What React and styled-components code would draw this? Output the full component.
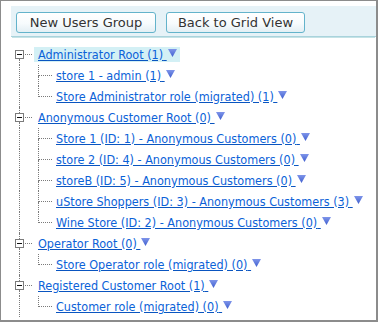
import React from "react";
import styled, { createGlobalStyle } from "styled-components";

const GlobalStyle = createGlobalStyle`
  html, body {
    margin: 0;
    padding: 0;
    background: #ffffff;
  }
  body {
    font-family: "DejaVu Sans", Verdana, sans-serif;
  }
`;

const Frame = styled.div`
  width: 378px;
  height: 322px;
  box-sizing: border-box;
  border-left: 1px solid #8c8c8c;
  border-top: 1px solid #8c8c8c;
  border-right: 2px solid #8c8c8c;
  border-bottom: 2px solid #8c8c8c;
  padding: 5px 0 0 10px;
  overflow: hidden;
  background: #fff;
`;

const Toolbar = styled.div`
  height: 31px;
  box-sizing: border-box;
  background: #e6f2f7;
  display: flex;
  align-items: flex-start;
  gap: 10px;
  padding: 6px 0 0 5px;
  border-bottom: 1px solid #a9d3dc;
  box-shadow: 0 2px 0 -1px #c5e3e6, 0 1px 0 0 #fff;
  margin-bottom: 3px;
`;

const Button = styled.button`
  height: 21px;
  width: ${(p) => p.$w}px;
  box-sizing: border-box;
  border: 1px solid #63b3cb;
  border-radius: 3px;
  background: linear-gradient(#ffffff 0%, #f7fbfd 55%, #e3eff4 100%);
  font-family: "DejaVu Sans", Verdana, sans-serif;
  font-size: 13px;
  color: #333;
  padding: 0;
  line-height: 19px;
`;

const Tree = styled.div`
  margin-top: 7px;
  padding-left: 4px;
  display: flex;
  flex-direction: column;
`;

const Row = styled.div`
  height: 21px;
  display: flex;
  align-items: stretch;
`;

const Stem = styled.div`
  width: 9px;
  display: flex;
  flex-direction: column;
  align-items: stretch;
`;

const StemLine = styled.div`
  flex: 1;
  margin-left: 4px;
  border-left: 1px dotted ${(p) => (p.$hidden ? "transparent" : "#7a7a7a")};
`;

const ToggleBox = styled.div`
  width: 9px;
  height: 9px;
  box-sizing: border-box;
  border: 1px solid #7b7b7b;
  background: #fff;
  display: flex;
  align-items: center;
  justify-content: center;
  &::after {
    content: "";
    width: 5px;
    height: 1px;
    background: #111;
  }
`;

const Connector = styled.div`
  width: 7px;
  margin-left: 1px;
  height: 10px;
  border-bottom: 1px dotted #7a7a7a;
`;

const Guide = styled.div`
  width: 18px;
  margin-left: 4px;
  border-left: 1px dotted #7a7a7a;
`;

const Elbow = styled.div`
  width: 14px;
  display: flex;
  flex-direction: column;
`;

const ElbowTop = styled.div`
  height: 10px;
  border-left: 1px dotted #7a7a7a;
  border-bottom: 1px dotted #7a7a7a;
  box-sizing: content-box;
`;

const ElbowBottom = styled.div`
  flex: 1;
  border-left: 1px dotted ${(p) => (p.$last ? "transparent" : "#7a7a7a")};
`;

const Label = styled.div`
  margin-left: ${(p) => (p.$root ? "2px" : "0")};
  align-self: center;
  height: 15px;
  display: flex;
  align-items: center;
  padding: 0 3px 0 4px;
  background: ${(p) => (p.$selected ? "#d3f0f5" : "transparent")};
  white-space: nowrap;
`;

const Link = styled.a`
  font-family: "DejaVu Sans Condensed", "DejaVu Sans", sans-serif;
  font-size: 12.5px;
  color: #0b62d8;
  text-decoration: underline;
  text-decoration-color: #0a55c0;
  cursor: pointer;
`;

const Arrow = () => (
  <svg width="9" height="8" viewBox="0 0 9 8" style={{ marginLeft: 1, marginTop: -3 }}>
    <defs>
      <linearGradient id="arw" x1="0" y1="0" x2="0" y2="1">
        <stop offset="0" stopColor="#7f95ea" />
        <stop offset="1" stopColor="#3f5fcf" />
      </linearGradient>
    </defs>
    <polygon points="0,0 9,0 4.5,8" fill="url(#arw)" />
  </svg>
);

const tree = [
  {
    label: "Administrator Root (1)",
    selected: true,
    children: ["store 1 - admin (1)", "Store Administrator role (migrated) (1)"],
  },
  {
    label: "Anonymous Customer Root (0)",
    children: [
      "Store 1 (ID: 1) - Anonymous Customers (0)",
      "store 2 (ID: 4) - Anonymous Customers (0)",
      "storeB (ID: 5) - Anonymous Customers (0)",
      "uStore Shoppers (ID: 3) - Anonymous Customers (3)",
      "Wine Store (ID: 2) - Anonymous Customers (0)",
    ],
  },
  {
    label: "Operator Root (0)",
    children: ["Store Operator role (migrated) (0)"],
  },
  {
    label: "Registered Customer Root (1)",
    children: ["Customer role (migrated) (0)"],
  },
];

const NodeLabel = ({ text, root, selected }) => (
  <Label $root={root} $selected={selected}>
    <Link>{text}&nbsp;</Link>
    <Arrow />
  </Label>
);

export default function App() {
  return (
    <>
      <GlobalStyle />
      <Frame>
        <Toolbar>
          <Button $w={140}>New Users Group</Button>
          <Button $w={139}>Back to Grid View</Button>
        </Toolbar>
        <Tree>
          {tree.map((node, i) => (
            <React.Fragment key={node.label}>
              <Row>
                <Stem>
                  <StemLine $hidden={i === 0} />
                  <ToggleBox />
                  <StemLine />
                </Stem>
                <Connector />
                <NodeLabel text={node.label} root selected={node.selected} />
              </Row>
              {node.children.map((child, j) => (
                <Row key={child}>
                  <Guide />
                  <Elbow>
                    <ElbowTop />
                    <ElbowBottom $last={j === node.children.length - 1} />
                  </Elbow>
                  <NodeLabel text={child} />
                </Row>
              ))}
            </React.Fragment>
          ))}
        </Tree>
      </Frame>
    </>
  );
}
